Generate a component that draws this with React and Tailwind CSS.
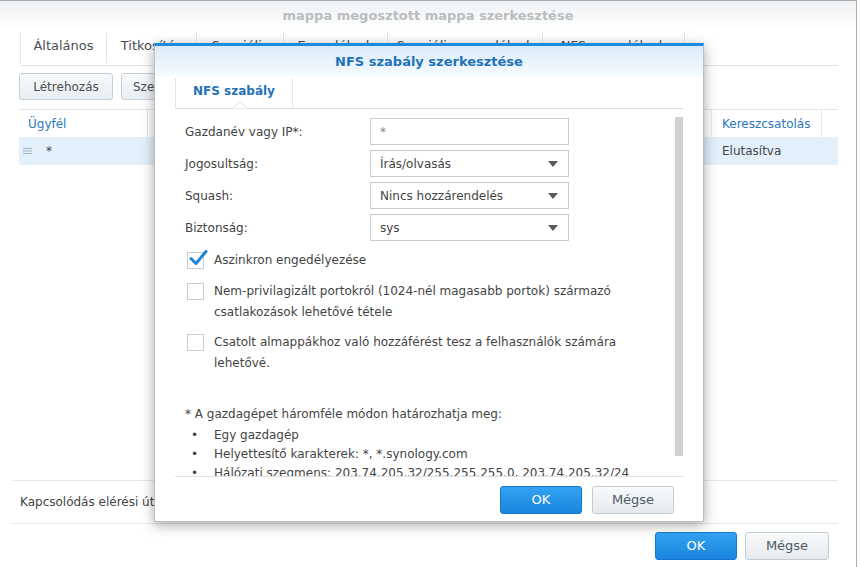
import React from 'react';

const font = "font-['DejaVu_Sans',Verdana,sans-serif]";

const tabs = [
  { label: 'Általános', w: 'w-[87px]' },
  { label: 'Titkosítás', w: 'w-[90px]' },
  { label: 'Speciális', w: 'w-[87px]' },
  { label: 'Engedélyek', w: 'w-[104px]' },
  { label: 'Speciális engedélyek', w: 'w-[155px]' },
  { label: 'NFS-engedélyek', w: 'w-[142px]' },
];

const Arrow = () => (
  <svg width="10" height="6" viewBox="0 0 10 6" className="shrink-0">
    <path d="M0 0 L10 0 L5 6 Z" fill="#555b61" />
  </svg>
);

const GrayButton = ({ children, w = 'w-[82px]' }) => (
  <button className={`h-[28px] ${w} rounded-[3px] border border-[#c3cbd2] bg-gradient-to-b from-[#f8fafb] to-[#e6ebef] text-[13px] text-[#4f5a64]`}>
    {children}
  </button>
);

const BlueButton = ({ children }) => (
  <button className="h-[28px] w-[82px] rounded-[3px] border border-[#1678cc] bg-gradient-to-b from-[#33a3f2] to-[#1a85dc] text-[13px] text-white">
    {children}
  </button>
);

const Field = ({ label, value, select }) => (
  <div className="flex items-center mt-[5px] first:mt-0">
    <div className="w-[185px] text-[#444]">{label}</div>
    <div className="h-[27px] w-[199px] border border-[#c9cdd1] bg-white flex items-center justify-between pl-[9px] pr-[10px]">
      <span className={select ? 'text-[#444]' : 'text-[#888]'}>{value}</span>
      {select && <Arrow />}
    </div>
  </div>
);

const Check = ({ checked, children, className }) => (
  <div className={`flex items-start leading-[21px] ${className}`}>
    <div className="relative ml-[2px] mt-[2px] h-[17px] w-[17px] shrink-0 border border-[#c9cdd1] bg-white">
      {checked && (
        <svg width="20" height="18" viewBox="0 0 20 18" className="absolute -top-[4px] left-[1px]">
          <path d="M2 9.5 L7 14.5 L17 2.5" fill="none" stroke="#1f86d6" strokeWidth="3" strokeLinecap="round" strokeLinejoin="round" />
        </svg>
      )}
    </div>
    <div className="ml-[10px] text-[#444]">{children}</div>
  </div>
);

const Bullet = ({ children }) => (
  <div className="flex leading-[19px] text-[#444]">
    <span className="w-[29px] pl-[6px]">•</span>
    <span>{children}</span>
  </div>
);

const NfsDialog = () => (
  <div className="absolute left-[154px] top-[43px] w-[550px] h-[479px] bg-white border-x border-b border-[#b9bec3] border-t-[3px] border-t-[#1b8be0] shadow-[0_3px_12px_rgba(0,0,0,0.35)] flex flex-col">
    <div className="h-[30px] bg-gradient-to-b from-[#d9ebf9] to-[#f7fbfe] flex items-center justify-center pt-[2px]">
      <span className="text-[13px] font-bold text-[#1f72b8]">NFS szabály szerkesztése</span>
    </div>
    <div className="mx-[20px] h-[33px] border-b border-[#d9dcdf] flex relative">
      <div className="h-[31px] mt-[2px] border-x border-[#e3e5e7] px-[17px] pb-[5px] flex items-center">
        <span className="text-[12px] font-bold text-[#1f72b8]">NFS szabály</span>
      </div>
      <svg width="16" height="8" viewBox="0 0 16 8" className="absolute left-[57px] -bottom-[1px]">
        <path d="M0 7.5 L8 0.5 L16 7.5" fill="#fff" stroke="#d9dcdf" strokeWidth="1" />
      </svg>
    </div>
    <div className="relative mx-[20px] h-[368px] overflow-hidden border-b border-[#dfe2e5]">
      <div className="pt-[9px] pl-[10px]">
        <Field label="Gazdanév vagy IP*:" value="*" />
        <Field label="Jogosultság:" value="Írás/olvasás" select />
        <Field label="Squash:" value="Nincs hozzárendelés" select />
        <Field label="Biztonság:" value="sys" select />
        <Check checked className="mt-[9px]">Aszinkron engedélyezése</Check>
        <Check className="mt-[10px]">
          Nem-privilagizált portokról (1024-nél magasabb portok) származó
          <br />
          csatlakozások lehetővé tétele
        </Check>
        <Check className="mt-[9px]">
          Csatolt almappákhoz való hozzáférést tesz a felhasználók számára
          <br />
          lehetővé.
        </Check>
        <div className="mt-[30px] leading-[20px] text-[#444]">* A gazdagépet háromféle módon határozhatja meg:</div>
        <div className="mt-[2px]">
          <Bullet>Egy gazdagép</Bullet>
          <Bullet>Helyettesítő karakterek: *, *.synology.com</Bullet>
          <Bullet>Hálózati szegmens: 203.74.205.32/255.255.255.0, 203.74.205.32/24</Bullet>
        </div>
      </div>
      <div className="absolute right-0 top-[8px] w-[8px] h-[339px] bg-[#d0d0d0]" />
    </div>
    <div className="flex-1 flex justify-end items-start pt-[9px] pr-[29px] gap-[10px]">
      <BlueButton>OK</BlueButton>
      <GrayButton>Mégse</GrayButton>
    </div>
  </div>
);

export default function App() {
  return (
    <div className={`relative w-[860px] h-[567px] overflow-hidden bg-white text-[12px] ${font}`}>
      <div className="w-[857px] h-[567px] border-t border-r border-[#a9adb1] flex flex-col">
        <div className="h-[29px] bg-gradient-to-b from-[#eff1f2] to-white flex items-center justify-center">
          <span className="text-[13px] font-bold text-[#b9bdc1]">mappa megosztott mappa szerkesztése</span>
        </div>
        <div className="mx-[20px] w-[818px] h-[36px] border-b border-[#dfe2e5] flex">
          {tabs.map((t, i) => (
            <div
              key={t.label}
              className={`${t.w} h-[30px] mt-[3px] pb-[5px] flex items-center justify-center border-r border-[#e3e5e7] text-[13px] text-[#4a4f54] ${i === 0 ? 'border-l' : ''}`}
            >
              {t.label}
            </div>
          ))}
        </div>
        <div className="flex gap-[8px] pl-[19px] pt-[7px]">
          {['Létrehozás', 'Szerkesztés', 'Törlés'].map((b) => (
            <button
              key={b}
              className="h-[27px] px-[11px] min-w-[94px] rounded-[3px] border border-[#c8cfd5] bg-gradient-to-b from-[#f7f9fa] to-[#e9eef2] text-[12px] text-[#4a4f54]"
            >
              {b}
            </button>
          ))}
        </div>
        <div className="ml-[19px] w-[819px] mt-[9px] border-t border-[#e3e5e7]">
          <div className="h-[27px] flex text-[12px] text-[#2a78c0]">
            <div className="w-[129px] border-r border-[#e6e8ea] flex items-center px-[9px]">Ügyfél</div>
            <div className="w-[564px] border-r border-[#e6e8ea]" />
            <div className="w-[110px] border-r border-[#e6e8ea] flex items-center px-[10px]">Kereszcsatolás</div>
          </div>
          <div className="h-[28px] bg-[#e2f0fb] flex items-center text-[12px] text-[#444]">
            <div className="w-[129px] flex items-center">
              <svg width="9" height="8" viewBox="0 0 9 8" className="ml-[4px]">
                <path d="M0 1.5 H9 M0 4 H9 M0 6.5 H9" stroke="#a9b2ba" strokeWidth="1" />
              </svg>
              <span className="ml-[14px]">*</span>
            </div>
            <div className="w-[564px]" />
            <div className="w-[110px] px-[10px]">Elutasítva</div>
          </div>
        </div>
        <div className="flex-1" />
        <div className="ml-[12px] w-[826px] h-[43px] border-t border-[#e6e8ea] flex items-center pl-[8px] text-[12px] text-[#444]">
          Kapcsolódás elérési út:
        </div>
        <div className="ml-[12px] w-[826px] h-[44px] border-t border-[#e6e8ea] flex justify-end items-start pt-[8px] pr-[9px] gap-[8px]">
          <BlueButton>OK</BlueButton>
          <GrayButton w="w-[84px]">Mégse</GrayButton>
        </div>
      </div>
      <NfsDialog />
    </div>
  );
}
